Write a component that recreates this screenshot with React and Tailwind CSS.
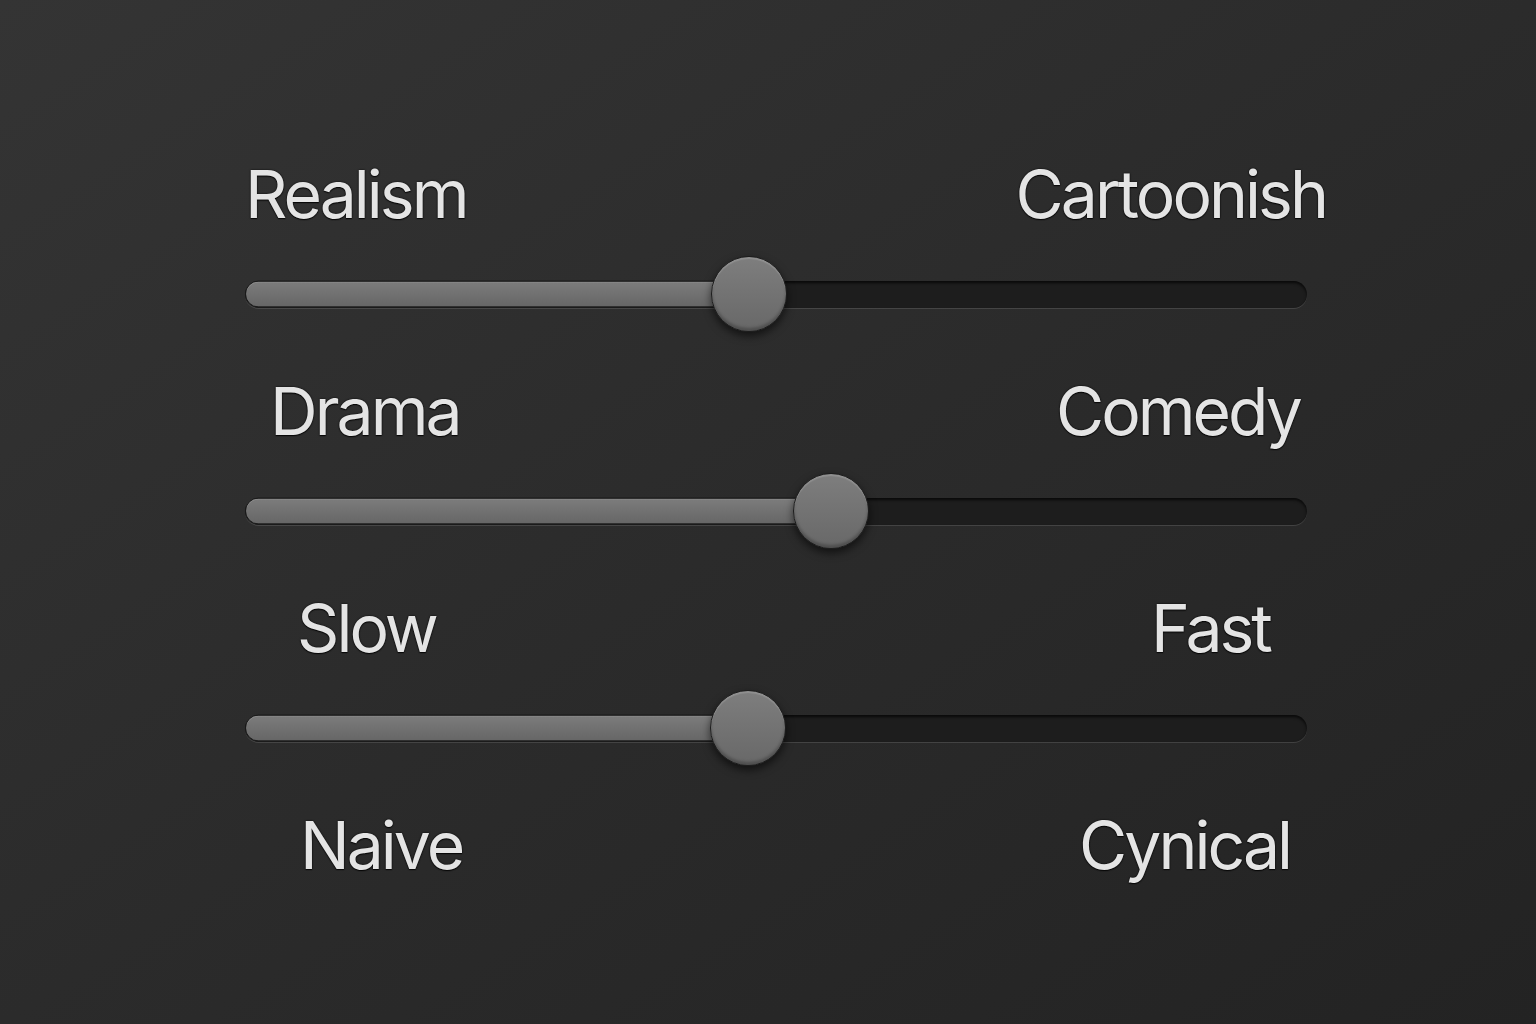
const sliders = [
  { left: "Realism", right: "Cartoonish", value: 47.5, pad: "pl-0 pr-0" },
  { left: "Drama", right: "Comedy", value: 55.2, pad: "pl-[25px] pr-[26px]" },
  { left: "Slow", right: "Fast", value: 47.4, pad: "pl-[52px] pr-[56px]" },
];

function Label({ left, right, pad }) {
  return (
    <div className={`flex justify-between items-start h-[66px] text-[66px] leading-none tracking-[-0.045em] text-[#e4e4e4] [text-shadow:0_0_2px_#000,0_1px_1px_#0a0a0a] ${pad}`}>
      <span>{left}</span>
      <span>{right}</span>
    </div>
  );
}

function Slider({ value }) {
  return (
    <div className="relative h-[76px] w-[1062px] flex items-center">
      {/* empty track */}
      <div className="h-[27px] w-full rounded-full bg-[#1d1d1d] shadow-[inset_0_2px_3px_rgba(0,0,0,0.7),0_1px_0_rgba(255,255,255,0.12)]" />
      {/* filled part */}
      <div
        className="absolute left-0 top-1/2 -translate-y-1/2 h-[27px] rounded-l-full bg-gradient-to-b from-[#7c7c7c] to-[#666] border border-[#1a1a1a] shadow-[inset_0_1px_0_rgba(255,255,255,0.15)]"
        style={{ width: `${value}%` }}
      />
      {/* knob */}
      <div
        className="absolute top-1/2 -translate-x-1/2 -translate-y-1/2 w-[76px] h-[76px] rounded-full bg-gradient-to-b from-[#7e7e7e] to-[#686868] border border-[#1c1c1c] shadow-[0_4px_8px_rgba(0,0,0,0.6),inset_0_2px_1px_rgba(255,255,255,0.15),inset_0_-3px_3px_rgba(0,0,0,0.25)]"
        style={{ left: `${value}%` }}
      />
    </div>
  );
}

export default function App() {
  return (
    <div className="w-[1536px] h-[1024px] overflow-hidden bg-gradient-to-br from-[#343434] via-[#2b2b2b] to-[#232323] font-['Inter',sans-serif]">
      <div className="ml-[245px] w-[1081px] pt-[161px] flex flex-col gap-[46px]">
        {sliders.map((s) => (
          <div key={s.left} className="flex flex-col gap-[29px]">
            <Label left={s.left} right={s.right} pad={s.pad} />
            <Slider value={s.value} />
          </div>
        ))}
        <Label left="Naive" right="Cynical" pad="pl-[55px] pr-[36px]" />
      </div>
    </div>
  );
}
